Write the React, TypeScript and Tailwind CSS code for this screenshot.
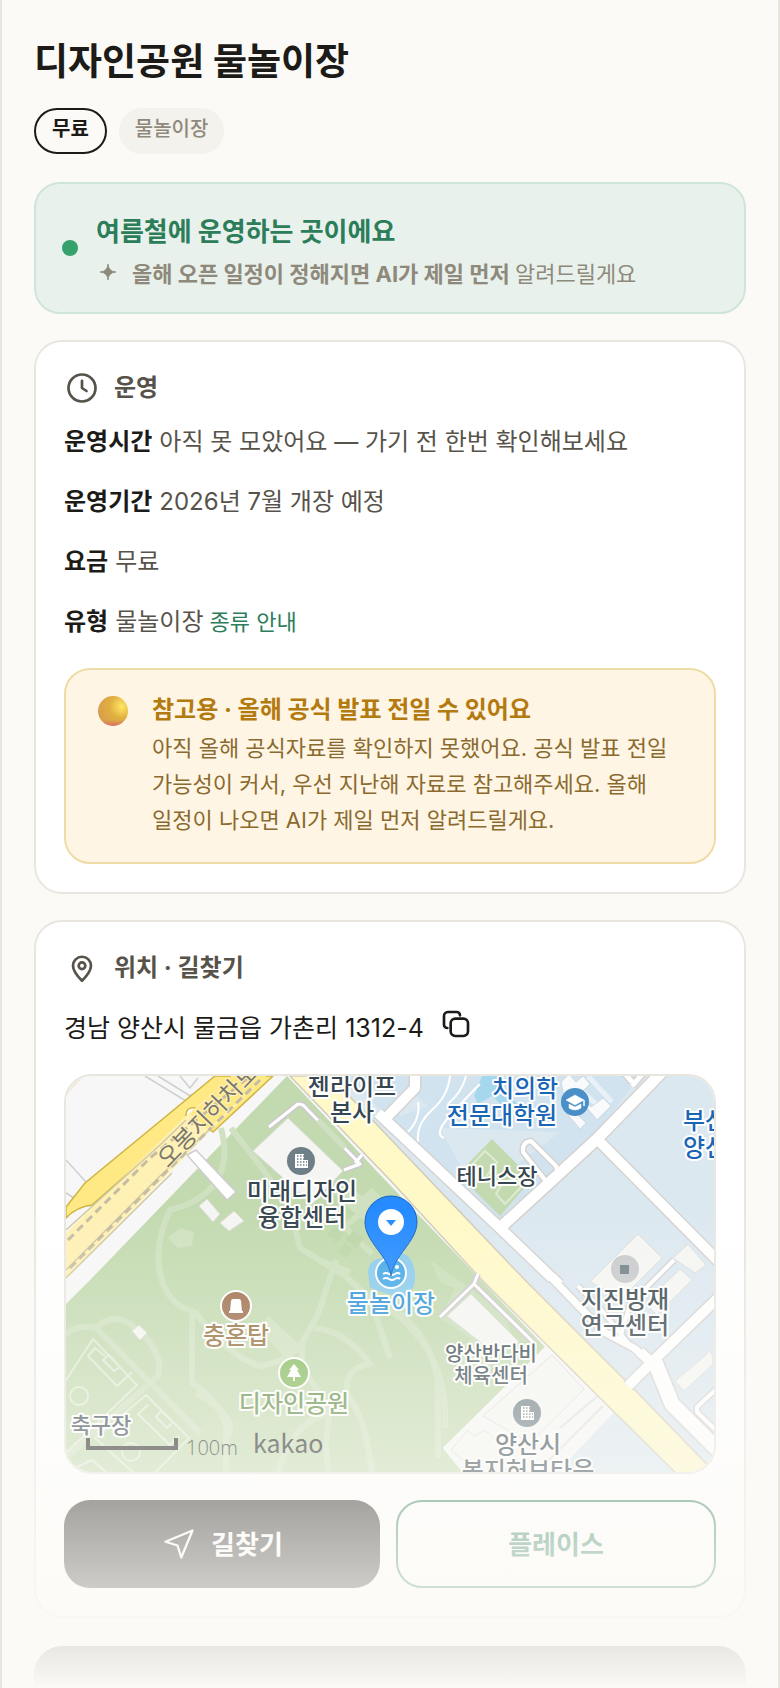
import type { ReactNode } from 'react';

const ROWS = [
  { label: '운영시간', value: '아직 못 모았어요 — 가기 전 한번 확인해보세요' },
  { label: '운영기간', value: '2026년 7월 개장 예정' },
  { label: '요금', value: '무료' },
  { label: '유형', value: '물놀이장', link: '종류 안내' },
];

// white roads with a grey casing: [path, width]
const ROADS: [string, number][] = [
  ['M378 1115 L500 1230 L552 1280 M640 1354 L650 1363', 10],
  ['M384 1122 L415 1090 V1070', 10],
  ['M500 1230 L597 1141 L662 1074', 11],
  ['M597 1141 L720 1265', 10],
  ['M632 1084 L622 1072 M632 1088 L646 1072', 5],
  ['M545 1182 L523 1154 Q522 1144 531 1143 L556 1168 L557 1172', 4],
  ['M536 1264 L604 1334 L634 1350 L650 1364', 7],
  ['M578 1288 L600 1310 L632 1350', 4],
  ['M628 1388 L654 1362 L724 1294', 10],
  ['M552 1278 L560 1286', 8],
  ['M674 1262 L630 1306 L620 1340', 4],
  ['M655 1364 L672 1406 L724 1458', 15],
  ['M724 1384 L697 1409 V1414 L724 1440', 4],
];

const BUILDINGS = [
  '288,1120 343,1173 312,1206 253,1153',
  '199,1208 207,1201 220,1216 213,1224',
  '220,1225 234,1213 244,1223 229,1233',
  '471,1296 519,1344 500,1353 488,1350 447,1318',
  '552,1357 584,1391 530,1445 483,1418',
  '638,1236 662,1260 622,1300 590,1284',
  '688,1246 706,1267 695,1275 673,1260',
  '680,1271 692,1282 657,1317 645,1305',
  '709,1352 713,1358 713,1366 684,1393 675,1383 706,1357',
  '468,1432 474,1438 485,1432 516,1462 500,1476 480,1476 451,1452',
  '139,1327 147,1335 140,1342 132,1333',
];

function Icon({ className, children }: { className: string; children: ReactNode }) {
  return (
    <svg viewBox="0 0 24 24" fill="none" stroke="currentColor" strokeLinecap="round" strokeLinejoin="round" className={className} aria-hidden="true">
      {children}
    </svg>
  );
}

function CardTitle({ icon, children }: { icon: ReactNode; children: ReactNode }) {
  return (
    <h2 className="flex items-center gap-3.5 text-2xl leading-9 font-bold text-[#57534a]">
      {icon}
      <span>{children}</span>
    </h2>
  );
}

function BuildingMark({ x, y }: { x: number; y: number }) {
  return (
    <g>
      <circle cx={x} cy={y} r="14" fill="#6f7f87" />
      <path d={`M${x - 6} ${y - 7} h9 v6 h4 v8 h-13 z`} fill="#fff" />
      <path
        d={`M${x - 4} ${y - 5} h7 M${x - 4} ${y - 2} h7 M${x - 4} ${y + 1} h10 M${x - 4} ${y + 4} h10`}
        stroke="#6f7f87"
        strokeWidth="1.5"
        strokeDasharray="1.5 1.5"
      />
    </g>
  );
}

function ParkMap() {
  return (
    <svg viewBox="66 1078 648 396" preserveAspectRatio="xMidYMid slice" className="block h-full w-full" role="img" aria-label="디자인공원 물놀이장 지도">
      <rect x="66" y="1078" width="648" height="396" fill="#f7f7f7" />

      {/* campus blocks east of the avenue */}
      <path d="M328 1076 H716 V1476 H555 L613 1415 L600 1400 Z" fill="#dce8f0" />
      <path d="M346 1078 H640 L596 1136 L500 1228 L380 1112 Z" fill="#d1e3ef" />
      <path d="M395 1104 L412 1094 L428 1108 L400 1118 Z M440 1130 L560 1134 L500 1180 L470 1185 Z" fill="#dce8f0" />
      <path d="M482 1078 H497 L500 1090 L518 1106 L505 1110 L492 1098 L478 1106 L474 1098 Z" fill="#a5d8ec" />
      <path d="M450 1078 Q448 1098 432 1112 T418 1144 M480 1086 Q462 1104 448 1120 T444 1140 M418 1104 Q421 1120 408 1134 M466 1078 Q462 1094 448 1106" stroke="#fff" strokeWidth="2" fill="none" />
      <path d="M575 1086 L600 1110 M588 1078 L612 1104" stroke="#fff" strokeOpacity=".5" strokeWidth="5" />
      <path d="M561 1084 l8 -8 l7 8 l7 -6 l7 8 l-9 9 l10 14 l12 -9 l8 8 l-14 14 l-10 -12 l-8 8 l7 7 l-6 6 l-12 -14 z" fill="#f8fafb" stroke="#cfd8dd" strokeWidth="1" />
      <path d="M492 1141 L532 1181 L500 1218 L458 1176 Z" fill="#c3dab0" />
      <path d="M485 1153 L497 1164 L484 1181 L471 1168 Z M502 1186 L521 1176 L526 1184 L505 1206 L496 1196 Z" fill="none" stroke="#deead2" strokeWidth="2" />

      {/* park */}
      <path d="M287 1078 L388 1185 L545 1349 L443 1450 L464 1476 H66 V1306 L92 1280 Z" fill="#c3dab0" />
      <g fill="none" stroke="#cfe1c0" strokeWidth="6" strokeLinejoin="round">
        <path d="M221 1130 Q230 1165 215 1185 T170 1212 Q154 1245 160 1275 T192 1313 V1385 Q222 1405 226 1430 V1476" />
        <path d="M231 1130 Q246 1150 262 1170 L290 1210 L300 1250 L345 1278 L370 1300 L390 1360" />
        <path d="M66 1336 Q78 1326 96 1330 Q112 1314 130 1326 Q165 1352 158 1378 L110 1420 L66 1460" />
        <path d="M96 1330 L200 1435" />
        <path d="M194 1313 Q235 1364 262 1368 Q290 1362 302 1345 L318 1316 L336 1262" />
        <path d="M302 1345 L302 1370 L330 1410 L326 1445 L328 1476 M314 1330 Q345 1332 370 1366 Q342 1370 348 1398 Q366 1420 372 1476" />
        <path d="M196 1395 Q240 1420 228 1438 M330 1415 Q290 1425 278 1476 M400 1315 Q440 1350 438 1400 L438 1460 M388 1310 Q450 1355 445 1430" />
        <path d="M330 1214 L372 1256 M344 1200 L380 1234 M330 1240 L380 1200 M318 1262 L350 1274" />
      </g>
      <path d="M268 1318 L298 1345 L286 1360 L258 1332 Z M168 1240 L180 1230 L194 1234 L192 1248 L178 1250 Z M340 1180 L362 1198 L372 1190 L384 1202 L360 1220 L330 1192 Z" fill="#cfe1c0" />
      <path d="M335 1228 l9 8 l-8 9 l-9 -8 z M354 1232 l10 9 l-8 9 l-10 -9 z M345 1245 l8 7 l-7 8 l-8 -7 z" fill="#bdd6a9" />
      <path d="M430 1262 L440 1285 L455 1290 L440 1320 L470 1340 L450 1385 L520 1360 L505 1318 L470 1290 Z" fill="#cfe1c0" fillOpacity=".7" />

      {/* football pitches */}
      <g fill="none" stroke="#e0ebd6" strokeWidth="2">
        <path d="M66 1382 L93 1341 L137 1387 L66 1455 M105 1358 L95 1350 L88 1358 L117 1388 L132 1374 M109 1357 L120 1369 L114 1373 L103 1362 Z" />
        <path d="M146 1397 L189 1440 L145 1485 L95 1440 Z M148 1407 L138 1416 L170 1447 L179 1438 M161 1413 L173 1424 L167 1430 L156 1419 Z" />
        <circle cx="79" cy="1398" r="9" />
        <circle cx="131" cy="1454" r="9" />
        <path d="M66 1474 L92 1462 L108 1476" />
      </g>

      {/* white lot below the park */}
      <path d="M545 1349 L600 1400 L613 1415 L555 1476 H464 L443 1450 Z" fill="#f7f7f6" />
      <path d="M603 1408 L535 1476 M560 1430 L600 1396" stroke="#e1e1e1" strokeWidth="2" />

      {/* avenue */}
      <path d="M290 1078 H330 L380 1130 L523 1280 L633 1390 L724 1484 H685 L600 1400 L480 1280 L390 1182 Z" fill="#fff9c8" stroke="#d3cbb9" strokeWidth="1.5" />

      <g fill="none" stroke="#d4d3d2" strokeLinejoin="round">
        {ROADS.map(([d, width]) => (
          <path key={d} d={d} strokeWidth={width + 3} />
        ))}
      </g>
      <g fill="none" stroke="#fff" strokeLinejoin="round">
        {ROADS.map(([d, width]) => (
          <path key={d} d={d} strokeWidth={width} />
        ))}
      </g>

      {/* service lanes inside the park */}
      <g fill="none" strokeLinejoin="round">
        <path d="M269 1129 L298 1106 L303 1107 L360 1166 L344 1172 M355 1165 L362 1157 M440 1319 L474 1286 L478 1276 M474 1286 L533 1344" stroke="#cdc8cf" strokeWidth="6" />
        <path d="M269 1129 L298 1106 L303 1107 L360 1166 L344 1172 M355 1165 L362 1157 M440 1319 L474 1286 L478 1276 M474 1286 L533 1344" stroke="#fff" strokeWidth="3" />
        <path d="M318 1122 L345 1150" stroke="#cfe1c0" strokeWidth="6" />
      </g>
      <path d="M187 1157 L196 1152 L236 1194 L227 1202 Z" fill="#fff" stroke="#d0cdd0" strokeWidth="1.5" />

      <g fill="#f5f6f3" stroke="#dcdcda" strokeWidth="1">
        {BUILDINGS.map((points) => (
          <polygon key={points} points={points} />
        ))}
      </g>

      {/* trunk road and underpass */}
      <path d="M66 1078 H84 L66 1098 Z" fill="#f3ebe2" />
      <path d="M145 1078 L186 1103 L192 1096 M158 1078 L192 1099 M66 1162 L86 1184 M66 1195 L74 1200 M180 1078 L190 1090 L198 1080" fill="none" stroke="#cfcfcf" strokeWidth="1.5" />
      <path d="M273 1078 L213 1134 L203 1125 L160 1147 L92 1207 Q76 1209 66 1220 V1209 L85 1185 L215 1078 Z" fill="#ffe985" stroke="#cfb43f" strokeWidth="1.5" />
      <path d="M186 1118 Q186 1108 196 1110 L200 1115" fill="#fff" stroke="#cfb43f" strokeWidth="1.5" />
      <path d="M66 1235 L186 1118 L232 1078 H266 L208 1135 L170 1174 L66 1280 Z" fill="#fff0b4" />
      <path d="M208 1131 L266 1078 H232 L190 1116 Z" fill="#ffe985" />
      <path d="M66 1232 L160 1147 L186 1122 M66 1272 L160 1178 L208 1133 M66 1280 L172 1175" fill="none" stroke="#cfc8a4" strokeWidth="1.5" />
      <path d="M68 1242 L150 1160 L250 1078 M70 1270 L166 1174 L260 1082" fill="none" stroke="#c4bda4" strokeWidth="3" strokeDasharray="8 5" />

      {/* pool */}
      <path d="M368 1275 Q368 1262 382 1260 Q395 1250 408 1258 Q418 1270 414 1288 L404 1300 L388 1296 L370 1290 Z" fill="#8ccbec" />

      {/* place markers */}
      <BuildingMark x={301} y={1163} />
      <BuildingMark x={527} y={1415} />
      <circle cx="575" cy="1104" r="14" fill="#4b8fc9" />
      <path d="M566 1102 L575 1097 L584 1102 L575 1107 Z M569 1106 V1110 Q575 1114 581 1110 V1106 L575 1109 Z" fill="#fff" stroke="#fff" strokeWidth=".5" />
      <path d="M584 1102 V1108" stroke="#fff" strokeWidth="1.5" />
      <circle cx="625" cy="1271" r="14" fill="#c9cacc" />
      <rect x="620" y="1267" width="9" height="9" fill="#73828a" />
      <circle cx="236" cy="1308" r="15" fill="#9f6f4e" stroke="#fff" strokeWidth="2" />
      <path d="M231 1303 Q231 1301 233 1301 H239 Q241 1301 241 1303 L242 1313 H243 V1315 H229 V1313 H230 Z" fill="#fff" />
      <circle cx="294" cy="1375" r="15" fill="#83bb5b" stroke="#fff" strokeWidth="2" />
      <path d="M294 1366 L299 1372 H297 L301 1379 H295 V1383 H293 V1379 H287 L291 1372 H289 Z" fill="#fff" />
      <circle cx="391" cy="1275" r="15" fill="#45a9e6" stroke="#fff" strokeWidth="2" />
      <path d="M383 1276 q3 -2 6 0 t6 0 t5 0 M383 1281 q3 -2 6 0 t6 0 t5 0" fill="none" stroke="#fff" strokeWidth="2" />
      <circle cx="397" cy="1269" r="2" fill="#fff" />

      <g
        fill="#37474f"
        stroke="#fff"
        strokeWidth="4"
        strokeLinejoin="round"
        textAnchor="middle"
        className="[paint-order:stroke] font-['Noto_Sans_CJK_KR',sans-serif] text-[24px] font-medium"
      >
        <text x="352" y="1097">젠라이프</text>
        <text x="352" y="1123">본사</text>
        <text x="302" y="1202">미래디자인</text>
        <text x="302" y="1228">융합센터</text>
        <text x="625" y="1310">지진방재</text>
        <text x="625" y="1336">연구센터</text>
        <text x="528" y="1455">양산시</text>
        <text x="528" y="1481">복지허브타운</text>
        <g className="text-[22px]">
          <text x="497" y="1186">테니스장</text>
          <text x="101" y="1435">축구장</text>
        </g>
        <g className="text-[20px]">
          <text x="491" y="1363">양산반다비</text>
          <text x="491" y="1385">체육센터</text>
        </g>
        <g fill="#1a66b5">
          <text x="525" y="1099">치의학</text>
          <text x="502" y="1126">전문대학원</text>
          <text x="683" y="1131" textAnchor="start">부산대</text>
          <text x="683" y="1158" textAnchor="start">양산캠퍼스</text>
        </g>
        <text x="391" y="1314" fill="#2f96d8">물놀이장</text>
        <text x="236" y="1346" fill="#94703f">충혼탑</text>
        <text x="294" y="1414" fill="#5f8e45">디자인공원</text>
      </g>
      <text transform="translate(168 1171) rotate(-46)" stroke="#fff3c4" strokeWidth="2" fill="#7c7868" className="[paint-order:stroke] font-['Noto_Sans_CJK_KR',sans-serif] text-[24px]">
        오봉지하차도
      </text>

      {/* scale bar */}
      <path d="M88 1440 V1450 H176 V1440" fill="none" stroke="#222" strokeWidth="4" />
      <text x="186" y="1457" fill="#222" className="font-['Open_Sans',sans-serif] text-[20px] font-light">100m</text>
      <text x="253" y="1455" fill="#222" className="font-['Noto_Sans_CJK_KR',sans-serif] text-[25px]">kakao</text>

      {/* selected place pin */}
      <path d="M391 1278 C389 1258 365 1244 365 1224 A26 26 0 0 1 417 1224 C417 1244 393 1258 391 1278 Z" fill="#258bff" stroke="#1463c4" strokeWidth="1" />
      <circle cx="391" cy="1224" r="13" fill="#fff" />
      <path d="M386 1222 H396 L391 1228 Z" fill="#258bff" />
    </svg>
  );
}

export default function App() {
  return (
    <main className="relative flex min-h-screen w-full flex-col overflow-hidden border-x-2 border-[#e8e6df] bg-[#fbfaf6] px-8 pt-9 font-[Inter,'Noto_Sans_CJK_KR',sans-serif] text-[#1c1b18]">
      <h1 className="text-[37px] leading-[52px] font-bold">디자인공원 물놀이장</h1>

      <div className="mt-5 flex gap-3 text-xl leading-[30px]">
        <span className="rounded-full border-2 border-[#1c1b18] px-4 pt-1 pb-2 font-bold">무료</span>
        <span className="rounded-full bg-[#f3f2ed] px-4 pt-1.5 pb-2.5 font-medium text-[#8f897c]">물놀이장</span>
      </div>

      <section className="mt-7 flex items-center gap-[18px] rounded-[26px] border-2 border-[#cfe5d8] bg-[#e8f1eb] px-[26px] py-5">
        <span className="h-4 w-4 shrink-0 rounded-full bg-[#35a26c]" />
        <div className="pt-2.5">
          <p className="text-[26px] leading-9 font-bold text-[#2c7d5a]">여름철에 운영하는 곳이에요</p>
          <p className="mt-1.5 flex items-center text-[22px] leading-9 font-bold text-[#8f897c]">
            <svg viewBox="0 0 24 24" className="mr-3 h-6 w-6 shrink-0" fill="currentColor" aria-hidden="true">
              <path d="M12 2 Q12.500 9.500 20 10 Q12.500 10.500 12 18 Q11.500 10.500 4 10 Q11.500 9.500 12 2 Z" stroke="currentColor" strokeWidth=".8" strokeLinejoin="round" />
            </svg>
            <span>
              올해 오픈 일정이 정해지면 AI가 제일 먼저 <span className="font-normal">알려드릴게요</span>
            </span>
          </p>
        </div>
      </section>

      <section className="mt-[26px] rounded-[28px] border-2 border-[#e8e6df] bg-white p-7">
        <CardTitle
          icon={
            <Icon className="h-9 w-9 stroke-[1.8]">
              <circle cx="12" cy="12" r="9" />
              <path d="M12 7.2 V12 L15 14" />
            </Icon>
          }
        >
          운영
        </CardTitle>
        <dl className="mt-4 flex flex-col gap-5">
          {ROWS.map((row) => (
            <div key={row.label} className="flex items-baseline gap-[7px] text-2xl leading-10">
              <dt className="font-bold">{row.label}</dt>
              <dd className="text-[#57534a]">
                {row.value}
                {row.link && (
                  <a href="#types" className="ml-1.5 text-[22px] text-[#2c7d5a]">
                    {row.link}
                  </a>
                )}
              </dd>
            </div>
          ))}
        </dl>

        <div className="mt-[26px] flex gap-6 rounded-[26px] border-2 border-[#efdba6] bg-[#fff5e4] px-8 pt-5 pb-6">
          <svg viewBox="0 0 30 30" className="mt-1.5 h-[30px] w-[30px] shrink-0" aria-hidden="true">
            <defs>
              <radialGradient id="ball" cx=".78" cy=".35" r=".8">
                <stop offset="0" stopColor="#ffe763" />
                <stop offset=".5" stopColor="#e0ae40" />
                <stop offset="1" stopColor="#d89e4c" />
              </radialGradient>
              <linearGradient id="ballShade" x1="0" y1="0" x2="0" y2="1">
                <stop offset=".8" stopColor="#d8606a" stopOpacity="0" />
                <stop offset="1" stopColor="#d8606a" stopOpacity=".8" />
              </linearGradient>
            </defs>
            <circle cx="15" cy="15" r="15" fill="url(#ball)" />
            <circle cx="15" cy="15" r="15" fill="url(#ballShade)" />
          </svg>
          <div>
            <p className="text-2xl leading-10 font-bold text-[#b37a10]">참고용 · 올해 공식 발표 전일 수 있어요</p>
            <p className="text-[22px] leading-9 break-keep text-[#8a6a2e]">
              아직 올해 공식자료를 확인하지 못했어요. 공식 발표 전일 가능성이 커서, 우선 지난해 자료로 참고해주세요. 올해 일정이 나오면 AI가 제일 먼저 알려드릴게요.
            </p>
          </div>
        </div>
      </section>

      <section className="mt-[26px] rounded-[28px] border-2 border-[#e8e6df] bg-white p-7">
        <CardTitle
          icon={
            <Icon className="h-9 w-9 stroke-[1.8]">
              <path d="M12 20.500 C9 17.500 6 14 6 10.500 a6 6 0 0 1 12 0 C18 14 15 17.500 12 20.500 Z" />
              <circle cx="12" cy="10.500" r="2.200" />
            </Icon>
          }
        >
          위치 · 길찾기
        </CardTitle>
        <div className="mt-[22px] flex items-center gap-4 text-[25px] leading-10">
          <address className="not-italic">경남 양산시 물금읍 가촌리 1312-4</address>
          <button type="button" aria-label="주소 복사" className="self-start">
            <Icon className="h-8 w-8 stroke-2">
              <rect x="8" y="8" width="13" height="13" rx="3.5" />
              <path d="M5.500 15 a2.500 2.500 0 0 1 -2.500 -2.500 V6 a3 3 0 0 1 3 -3 H12.500 a2.500 2.500 0 0 1 2.500 2.500" />
            </Icon>
          </button>
        </div>

        <div className="mt-[26px] h-[400px] overflow-hidden rounded-[28px] border-2 border-[#e8e6df]">
          <ParkMap />
        </div>

        <div className="mt-[26px] flex gap-4 text-[26px] font-bold">
          <button type="button" className="flex h-22 flex-1 items-center justify-center gap-3.5 rounded-[26px] bg-[#1c1b18] text-white">
            <Icon className="h-9 w-9 stroke-[1.5]">
              <path d="M21 3 L3 10.500 L11 13 L13.500 21 Z" />
            </Icon>
            길찾기
          </button>
          <button type="button" className="h-22 flex-1 rounded-[26px] border-2 border-[#2c7d5a] text-[#2c7d5a]">
            플레이스
          </button>
        </div>
      </section>

      <div className="mt-7 h-10 rounded-t-[28px] bg-[#1c1b18]" />

      {/* content fades into the page background */}
      <div className="pointer-events-none absolute inset-x-0 bottom-0 h-120 bg-linear-to-b from-[#fbfaf6]/0 to-[#fbfaf6]" />
    </main>
  );
}
